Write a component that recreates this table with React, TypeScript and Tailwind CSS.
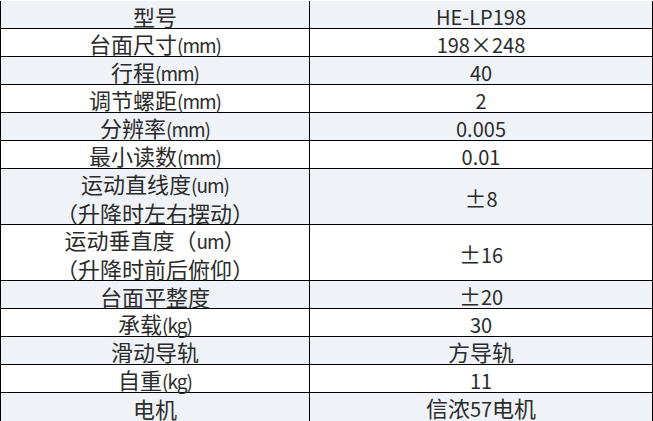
const rows: { label: string[]; value: string; tall?: boolean }[] = [
  { label: ['型号'], value: 'HE-LP198' },
  { label: ['台面尺寸(mm)'], value: '198×248' },
  { label: ['行程(mm)'], value: '40' },
  { label: ['调节螺距(mm)'], value: '2' },
  { label: ['分辨率(mm)'], value: '0.005' },
  { label: ['最小读数(mm)'], value: '0.01' },
  { label: ['运动直线度(um)', '（升降时左右摆动）'], value: '±8', tall: true },
  { label: ['运动垂直度（um）', '（升降时前后俯仰）'], value: '±16', tall: true },
  { label: ['台面平整度'], value: '±20' },
  { label: ['承载(kg)'], value: '30' },
  { label: ['滑动导轨'], value: '方导轨' },
  { label: ['自重(kg)'], value: '11' },
  { label: ['电机'], value: '信浓57电机' },
];

// ASCII runs get a smaller size, CJK glyphs stay at 22px like the YaHei original
function Mixed({ text, narrow }: { text: string; narrow?: boolean }) {
  const parts = text.split(/([\x20-\x7e]+)/).filter(Boolean);
  return (
    <span className="leading-[26px]">
      {parts.map((p, i) =>
        /^[\x20-\x7e]+$/.test(p) ? (
          <span key={i} className={narrow ? 'text-[19px] tracking-[-1px]' : 'text-[20px]'}>
            {p}
          </span>
        ) : (
          <span key={i}>{p}</span>
        )
      )}
    </span>
  );
}

export default function App() {
  return (
    <div
      className="w-[653px] h-[421px] bg-white pt-px overflow-hidden text-[#2b2b2b] text-[22px]"
      style={{ fontFamily: '"Noto Sans CJK SC", "Noto Sans", sans-serif' }}
    >
      <div className="border-x border-black">
        {rows.map((row, i) => {
          const last = i === rows.length - 1;
          return (
            <div
              key={i}
              className={`grid grid-cols-[309px_1fr] ${row.tall ? 'h-[56px]' : 'h-[28px]'} ${
                i % 2 === 0 ? 'bg-[#eff3f8]' : 'bg-white'
              } ${last ? '' : 'border-b border-black'}`}
            >
              <div className="border-r border-black flex flex-col items-center justify-center gap-px pt-px">
                {row.label.map((l) => (
                  <Mixed key={l} text={l} narrow />
                ))}
              </div>
              <div className="flex items-center justify-center pt-px">
                <Mixed text={row.value} />
              </div>
            </div>
          );
        })}
      </div>
    </div>
  );
}
